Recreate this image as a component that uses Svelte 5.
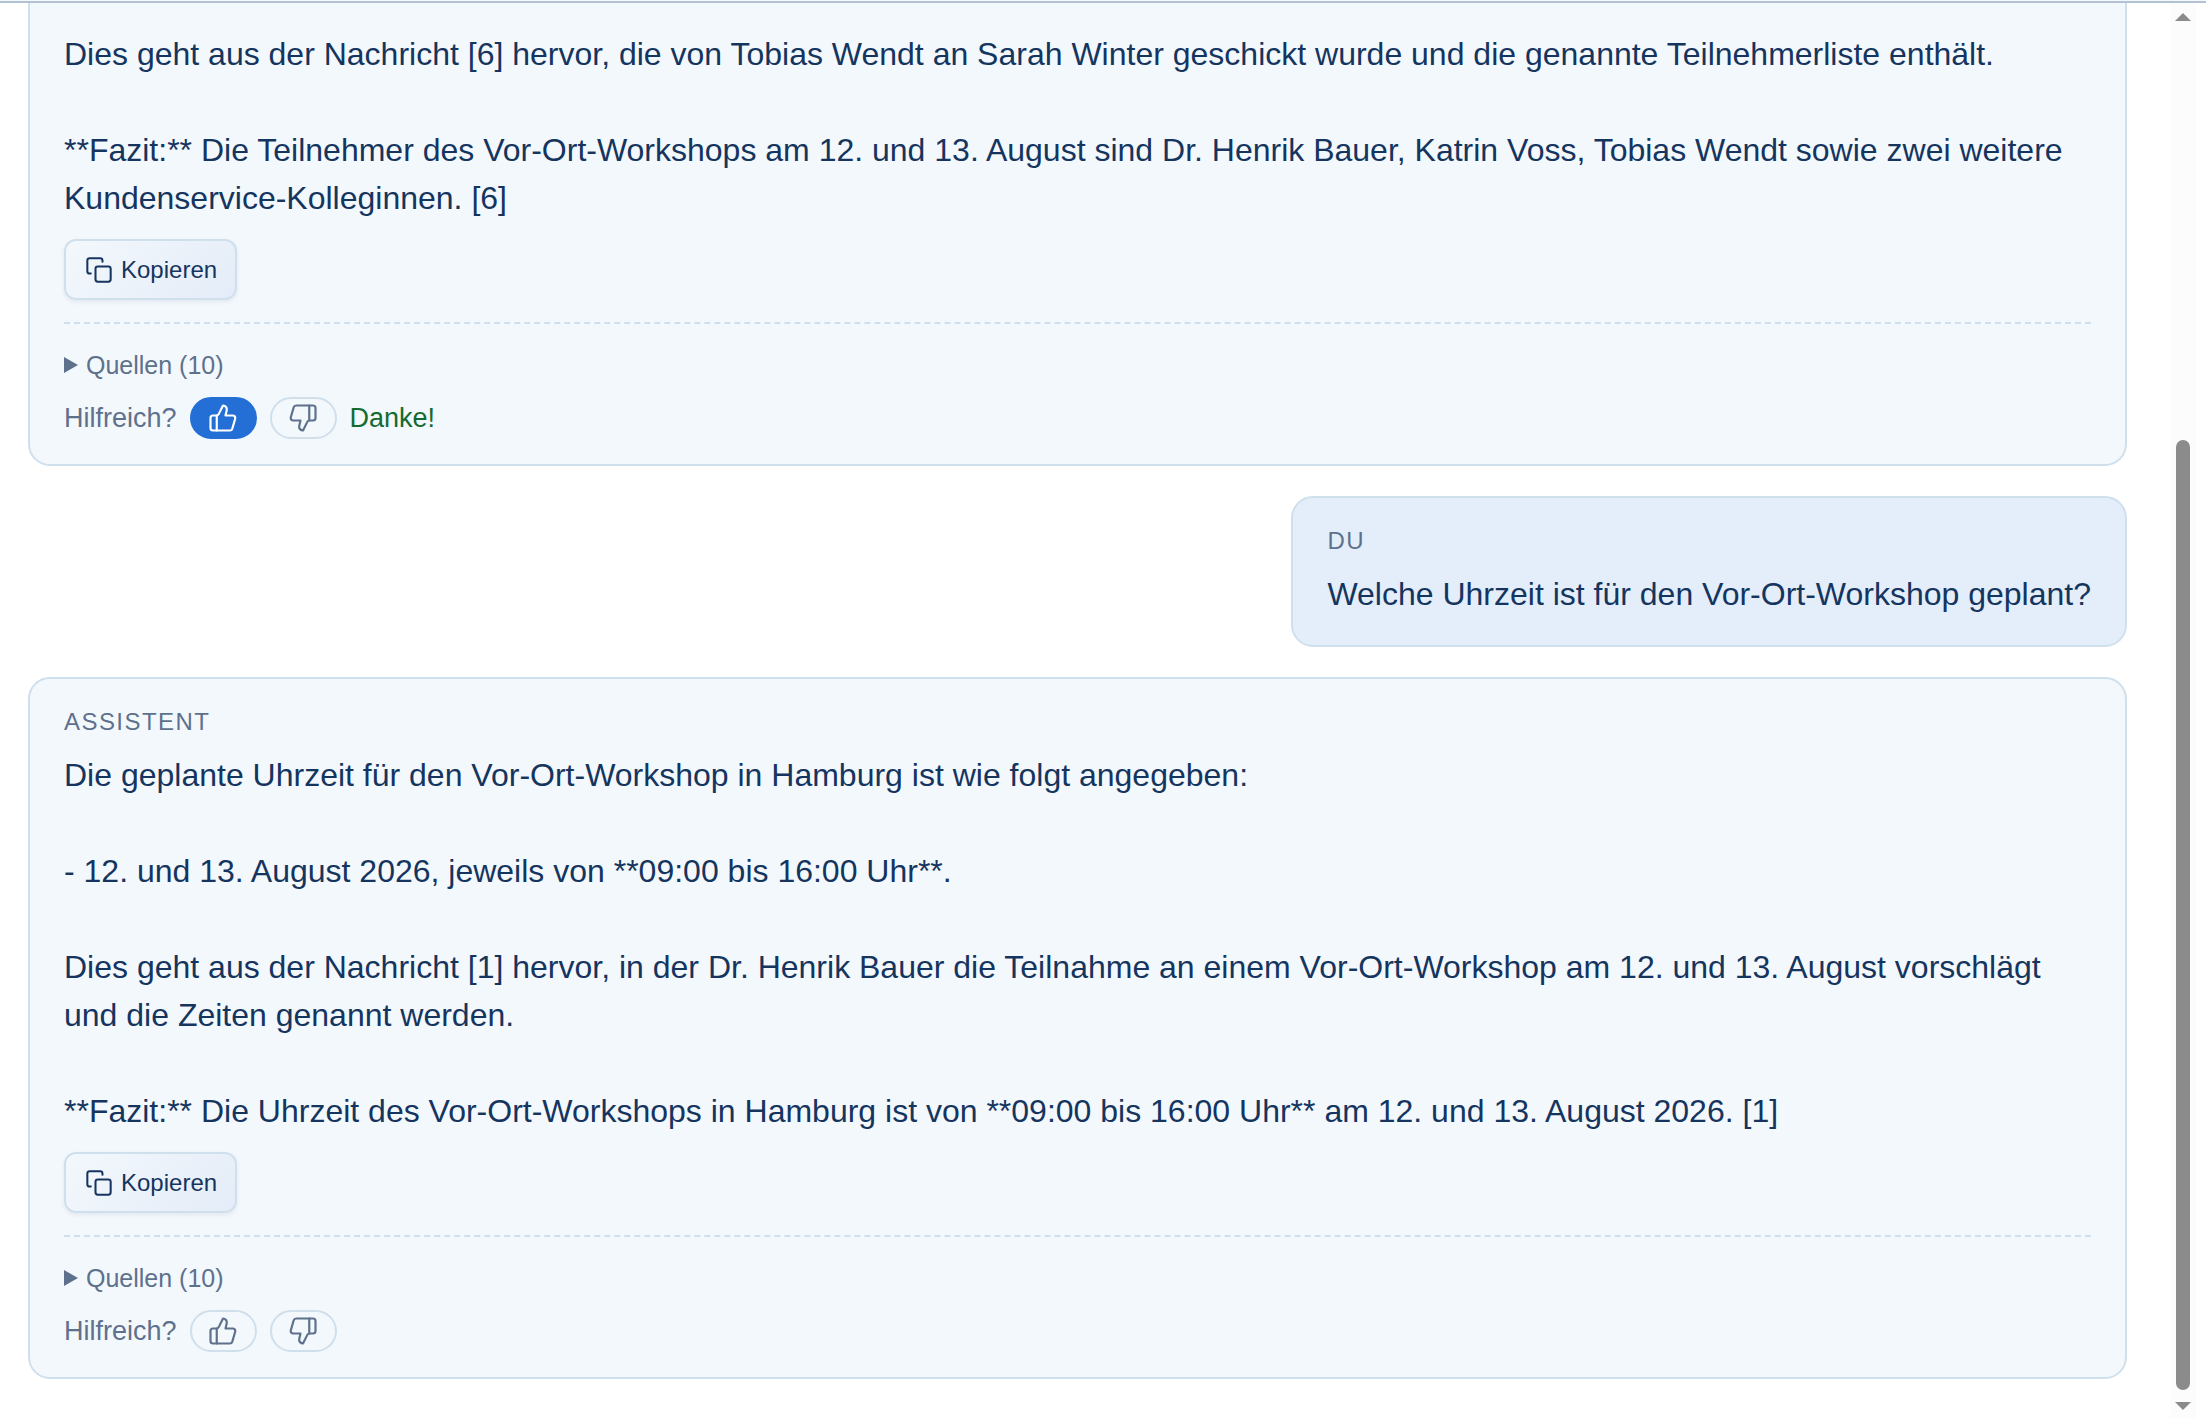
<script>
	let messages = $state([
		{
			role: 'assistant',
			label: '',
			text: `Dies geht aus der Nachricht [6] hervor, die von Tobias Wendt an Sarah Winter geschickt wurde und die genannte Teilnehmerliste enthält.

**Fazit:** Die Teilnehmer des Vor-Ort-Workshops am 12. und 13. August sind Dr. Henrik Bauer, Katrin Voss, Tobias Wendt sowie zwei weitere Kundenservice-Kolleginnen. [6]`,
			sources: 10,
			vote: 'up'
		},
		{
			role: 'user',
			label: 'Du',
			text: 'Welche Uhrzeit ist für den Vor-Ort-Workshop geplant?'
		},
		{
			role: 'assistant',
			label: 'Assistent',
			text: `Die geplante Uhrzeit für den Vor-Ort-Workshop in Hamburg ist wie folgt angegeben:

- 12. und 13. August 2026, jeweils von **09:00 bis 16:00 Uhr**.

Dies geht aus der Nachricht [1] hervor, in der Dr. Henrik Bauer die Teilnahme an einem Vor-Ort-Workshop am 12. und 13. August vorschlägt und die Zeiten genannt werden.

**Fazit:** Die Uhrzeit des Vor-Ort-Workshops in Hamburg ist von **09:00 bis 16:00 Uhr** am 12. und 13. August 2026. [1]`,
			sources: 10,
			vote: ''
		}
	]);

	function copy(text) {
		navigator.clipboard?.writeText(text);
	}
</script>

{#snippet thumb()}
	<svg class="thumb-icon" viewBox="0 0 24 24" aria-hidden="true">
		<path d="M7 10v12" />
		<path
			d="M15 5.88 14 10h5.83a2 2 0 0 1 1.92 2.56l-2.33 8A2 2 0 0 1 17.5 22H4a2 2 0 0 1-2-2v-8a2 2 0 0 1 2-2h2.76a2 2 0 0 0 1.79-1.11L12 2a3.13 3.13 0 0 1 3 3.88Z"
		/>
	</svg>
{/snippet}

<div class="chat">
	<main class="messages">
		{#each messages as message}
			<article class="message {message.role}" class:continued={!message.label}>
				{#if message.label}
					<div class="role">{message.label}</div>
				{/if}
				<div class="text">{message.text}</div>

				{#if message.role === 'assistant'}
					<button class="copy" onclick={() => copy(message.text)}>
						<svg class="copy-icon" viewBox="0 0 24 24" aria-hidden="true">
							<rect x="9" y="9" width="13" height="13" rx="2" />
							<path d="M5 15H4a2 2 0 0 1-2-2V4a2 2 0 0 1 2-2h9a2 2 0 0 1 2 2v1" />
						</svg>
						Kopieren
					</button>
					<footer>
						<details>
							<summary>Quellen ({message.sources})</summary>
						</details>
						<div class="feedback">
							<span>Hilfreich?</span>
							<button
								class="vote"
								class:active={message.vote === 'up'}
								aria-label="Hilfreich"
								onclick={() => (message.vote = 'up')}>{@render thumb()}</button
							>
							<button
								class="vote down"
								class:active={message.vote === 'down'}
								aria-label="Nicht hilfreich"
								onclick={() => (message.vote = 'down')}>{@render thumb()}</button
							>
							{#if message.vote}
								<span class="thanks">Danke!</span>
							{/if}
						</div>
					</footer>
				{/if}
			</article>
		{/each}
	</main>

	<div class="scrollbar" aria-hidden="true">
		<svg class="arrow" viewBox="0 0 16 8"><path d="M8 0 16 8H0Z" /></svg>
		<div class="track"><div class="handle"></div></div>
		<svg class="arrow" viewBox="0 0 16 8"><path d="M0 0h16L8 8Z" /></svg>
	</div>
</div>

<style>
	:global(body) {
		background: #f3f8fc;
		color: #15355f;
		font-family: 'Liberation Sans', Arial, sans-serif;
	}

	.chat {
		box-sizing: border-box;
		display: flex;
		min-height: calc(100vh - 1px);
		margin-top: 1px;
		padding-right: 10px;
		border-top: 2px solid #b2c2d4;
		background: white;
	}

	.messages {
		flex: 1;
		display: flex;
		flex-direction: column;
		gap: 30px;
		padding: 0 43px 39px 28px;
	}

	.message {
		padding: 27px 34px 25px;
		border: 2px solid #cfdfec;
		border-radius: 22px;
		background: #f3f8fc;
	}
	.message.user {
		align-self: flex-end;
		padding-bottom: 27px;
		background: #e3eefa;
	}
	/* upper part is scrolled out of view */
	.message.continued {
		border-top: none;
		border-top-left-radius: 0;
		border-top-right-radius: 0;
	}

	.role {
		margin-bottom: 13px;
		color: #5e718c;
		font-size: 24px;
		line-height: 32px;
		letter-spacing: 0.06em;
		text-transform: uppercase;
	}

	.text {
		font-size: 32px;
		line-height: 48px;
		white-space: pre-wrap;
	}

	button {
		border: 2px solid #cfdfec;
		font-family: inherit;
		cursor: pointer;
	}
	svg {
		fill: none;
		stroke: currentColor;
		stroke-linecap: round;
		stroke-linejoin: round;
	}

	.copy {
		display: flex;
		align-items: center;
		gap: 8px;
		height: 61px;
		margin-top: 17px;
		padding: 0 18px 0 19px;
		border-radius: 12px;
		background: linear-gradient(135deg, #f3f8fc, #e4ecf8);
		box-shadow: 0 2px 4px rgba(21, 51, 95, 0.08);
		color: #15355f;
		font-size: 24px;
	}
	.copy-icon {
		width: 28px;
		height: 28px;
		stroke-width: 1.75;
	}

	footer {
		margin-top: 22px;
		padding-top: 22px;
		border-top: 2px dashed #cfdfec;
		color: #5e718c;
	}
	summary {
		display: flex;
		align-items: center;
		gap: 8px;
		font-size: 25px;
		line-height: 38px;
		list-style: none;
		cursor: pointer;
	}
	summary::before {
		content: '';
		width: 14px;
		height: 16px;
		background: currentColor;
		clip-path: polygon(0 0, 100% 50%, 0 100%);
	}
	details[open] summary::before {
		transform: rotate(90deg);
	}

	.feedback {
		display: flex;
		align-items: center;
		gap: 13px;
		margin-top: 13px;
		font-size: 27px;
	}
	.vote {
		display: flex;
		align-items: center;
		justify-content: center;
		width: 67px;
		height: 42px;
		padding: 0;
		border-radius: 21px;
		background: transparent;
		color: #5e718c;
	}
	.vote.active {
		border-color: #246fd6;
		background: #246fd6;
		color: white;
	}
	.thumb-icon {
		width: 30px;
		height: 30px;
		stroke-width: 1.75;
	}
	.down .thumb-icon {
		transform: rotate(180deg);
	}
	.thanks {
		color: #146b30;
	}

	.scrollbar {
		display: flex;
		flex-direction: column;
		align-items: center;
		width: 26px;
		padding: 10px 0 8px;
		background: #fcfcfc;
	}
	.arrow {
		width: 16px;
		height: 8px;
		fill: #8b8b8b;
		stroke: none;
	}
	.track {
		flex: 1;
		display: flex;
		flex-direction: column;
		justify-content: flex-end;
		margin: 6px 0 12px;
	}
	.handle {
		width: 14px;
		height: 69.7%;
		border-radius: 7px;
		background: #8b8b8b;
	}
</style>
